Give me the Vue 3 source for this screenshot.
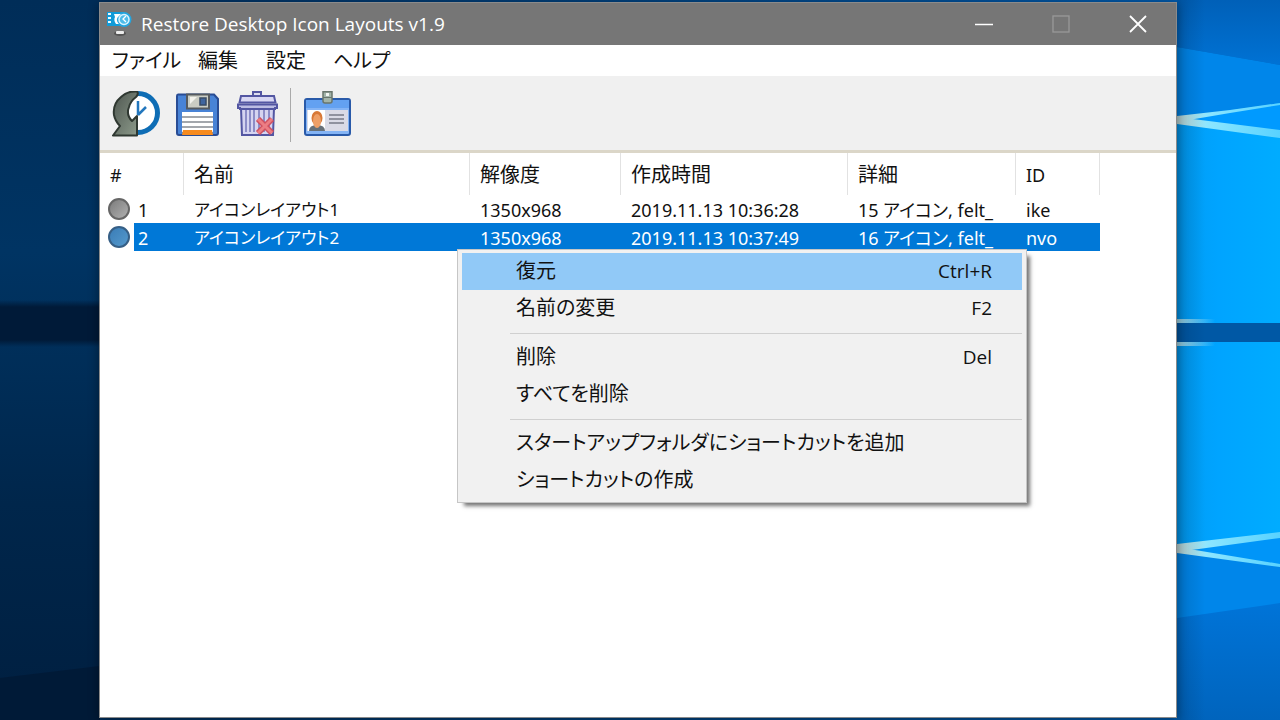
<script setup>
import { ref } from 'vue'

const menus = ['ファイル', '編集', '設定', 'ヘルプ']
const columns = [
  { key: 'no', label: '#' },
  { key: 'name', label: '名前' },
  { key: 'res', label: '解像度' },
  { key: 'time', label: '作成時間' },
  { key: 'detail', label: '詳細' },
  { key: 'id', label: 'ID' }
]
const rows = [
  { no: 1, name: 'アイコンレイアウト1', res: '1350x968', time: '2019.11.13 10:36:28', detail: '15 アイコン, felt_', id: 'ike' },
  { no: 2, name: 'アイコンレイアウト2', res: '1350x968', time: '2019.11.13 10:37:49', detail: '16 アイコン, felt_', id: 'nvo' }
]
const selected = ref(2)
const groups = [
  [{ label: '復元', key: 'Ctrl+R', hot: true }, { label: '名前の変更', key: 'F2' }],
  [{ label: '削除', key: 'Del' }, { label: 'すべてを削除', key: '' }],
  [{ label: 'スタートアップフォルダにショートカットを追加', key: '' }, { label: 'ショートカットの作成', key: '' }]
]
</script>

<template>
  <div class="desktop">
    <svg class="wallpaper" viewBox="0 0 1280 720" preserveAspectRatio="none" aria-hidden="true">
      <defs>
        <linearGradient id="left" x1="0" y1="0" x2="0" y2="1">
          <stop offset="0" stop-color="#002d58" />
          <stop offset=".35" stop-color="#003463" />
          <stop offset=".7" stop-color="#00264b" />
          <stop offset="1" stop-color="#001f40" />
        </linearGradient>
        <linearGradient id="band" x1="0" y1="0" x2="0" y2="1">
          <stop offset="0" stop-color="#001a38" stop-opacity="0" />
          <stop offset=".15" stop-color="#001a38" />
          <stop offset=".85" stop-color="#001a38" />
          <stop offset="1" stop-color="#001a38" stop-opacity="0" />
        </linearGradient>
        <linearGradient id="top" x1="0" y1="0" x2="1" y2="0">
          <stop offset="0" stop-color="#002b57" />
          <stop offset=".5" stop-color="#00417d" />
          <stop offset="1" stop-color="#005db2" />
        </linearGradient>
        <linearGradient id="upper" x1="0" y1="0" x2="0" y2="1">
          <stop offset="0" stop-color="#0060b8" />
          <stop offset="1" stop-color="#0072d4" />
        </linearGradient>
        <linearGradient id="lower" x1="0" y1="0" x2="0" y2="1">
          <stop offset="0" stop-color="#0074d8" />
          <stop offset="1" stop-color="#0064bd" />
        </linearGradient>
        <linearGradient id="pane" x1="0" y1="0" x2="1" y2="0">
          <stop offset="0" stop-color="#009cf4" />
          <stop offset=".4" stop-color="#00a4ff" />
          <stop offset="1" stop-color="#00acff" />
        </linearGradient>
        <linearGradient id="ray" x1="0" y1="0" x2="1" y2="0">
          <stop offset="0" stop-color="#d2e6df" />
          <stop offset=".3" stop-color="#8ce6ff" />
          <stop offset="1" stop-color="#58d2ff" />
        </linearGradient>
        <linearGradient id="shade" x1="0" y1="0" x2="1" y2="0">
          <stop offset="0" stop-color="#00203c" stop-opacity=".2" />
          <stop offset="1" stop-color="#00203c" stop-opacity="0" />
        </linearGradient>
        <linearGradient id="glint" x1="0" y1="0" x2="1" y2="0">
          <stop offset="0" stop-color="#b4e4ee" />
          <stop offset="1" stop-color="#b4e4ee" stop-opacity="0" />
        </linearGradient>
      </defs>
      <rect width="1280" height="720" fill="url(#top)" />
      <rect width="100" height="720" fill="url(#left)" />
      <path d="M0 300H100V347H0z" fill="url(#band)" />
      <path d="M0 678L100 666V720H0z" fill="#001a37" />
      <path d="M1177 0H1280V65L1177 47z" fill="url(#upper)" />
      <path d="M1177 47L1280 65V720H1177z" fill="#0086ea" />
      <path d="M1177 121L1280 103V346H1177z" fill="url(#pane)" />
      <path d="M1177 118L1280 103V132z" fill="#009aff" />
      <path d="M1177 116L1230 110L1280 103V105L1230 113L1177 122z" fill="url(#ray)" />
      <path d="M1177 117L1280 130V138L1177 124z" fill="url(#ray)" />
      <path d="M1177 342H1280V533L1177 549z" fill="url(#pane)" />
      <path d="M1177 319H1215V323H1177zM1177 342H1215V346H1177z" fill="url(#glint)" />
      <path d="M1177 323H1280V342H1177z" fill="#0058a5" />
      <path d="M1177 549L1280 534V565z" fill="#0095f8" />
      <path d="M1177 618L1280 603V720H1177z" fill="url(#lower)" />
      <path d="M1177 544L1280 532V538L1177 552z" fill="url(#ray)" />
      <path d="M1177 547L1280 564V567L1177 553z" fill="url(#ray)" />
      <rect x="1177" width="28" height="720" fill="url(#shade)" />
    </svg>

    <main class="window">
      <header class="titlebar">
        <svg class="app-icon" viewBox="0 0 26 26" aria-hidden="true">
          <rect x="0" y="1" width="17" height="14" fill="#119bd8" />
          <path d="M1 2h3v2H1zM1 6h3v2H1zM1 10h3v2H1z" fill="#e9f9ff" />
          <circle cx="17" cy="8.500" r="7.500" fill="#25a5df" />
          <circle cx="17" cy="8.500" r="5" fill="#4dbbe9" stroke="#d9f4ff" stroke-width="1.500" />
          <path d="M7 3h7l-3 3c-2 2-1 5 1 7H9c-2-3-2-5-1-7z" fill="#fff" />
          <path d="M19 5l-3 3 3 3" fill="none" stroke="#fff" stroke-width="1.300" />
          <ellipse cx="13" cy="22.500" rx="6" ry="2.500" fill="#555" />
          <rect x="9" y="20" width="8" height="3" rx="1" fill="#ececec" />
        </svg>
        <h1>Restore Desktop Icon Layouts v1.9</h1>
        <div class="controls">
          <button type="button" aria-label="最小化"><svg viewBox="0 0 20 20"><path d="M1 10.500H19" stroke="#fff" stroke-width="1.500" /></svg></button>
          <button type="button" aria-label="最大化" disabled><svg viewBox="0 0 20 20"><rect x="2" y="2" width="16" height="16" fill="none" stroke="#999" stroke-width="1.300" /></svg></button>
          <button type="button" aria-label="閉じる"><svg viewBox="0 0 20 20"><path d="M2 2L18 18M18 2L2 18" stroke="#fff" stroke-width="1.800" /></svg></button>
        </div>
      </header>

      <nav class="menubar">
        <button v-for="m in menus" :key="m" type="button">{{ m }}</button>
      </nav>

      <div class="toolbar">
        <button type="button" aria-label="復元">
          <svg viewBox="0 0 50 48">
            <defs>
              <linearGradient id="arrow" x1="0" y1="0" x2="1" y2="1">
                <stop offset="0" stop-color="#4d554f" />
                <stop offset="1" stop-color="#8d9b8b" />
              </linearGradient>
            </defs>
            <circle cx="28" cy="22" r="19.500" fill="#fff" stroke="#0e6db5" stroke-width="5" />
            <path d="M27 0.500C20 0 15 2 11 6C5 11 3 17 4 24c1 5 3 8 6 11L3 44.500H27V25l-5 5c-4-4-5-9-3-14 1-4 3-7 7-10 1-1 3-3 1-5.500z" fill="url(#arrow)" stroke="#2f3831" stroke-width="2" stroke-linejoin="round" />
            <path d="M28 10V24M28 24L36 16" fill="none" stroke="#2377bd" stroke-width="2.500" />
          </svg>
        </button>
        <button type="button" aria-label="保存">
          <svg viewBox="0 0 50 48">
            <path d="M7 3.500H43L47 8V42Q47 44 45 44H8Q6 44 6 42V5Q6 3.500 7 3.500z" fill="#4883d6" stroke="#294c94" stroke-width="2" />
            <rect x="16" y="3.500" width="22" height="14" fill="#cbcdc3" stroke="#555a5f" stroke-width="2" />
            <path d="M19 6H26L19 13z" fill="#f3f3ed" />
            <rect x="29" y="7" width="6" height="7" fill="#3f659f" stroke="#394b66" stroke-width="1.500" />
            <rect x="11" y="21" width="31" height="20" fill="#fff" />
            <path d="M11 26H42M11 31H42M11 36H42" stroke="#858b91" stroke-width="1.500" />
            <path d="M12 39H41L42 44H11z" fill="#f68b1f" />
          </svg>
        </button>
        <button type="button" aria-label="削除">
          <svg viewBox="0 0 50 48">
            <path d="M21 5V1H29V5" fill="#dde" stroke="#5356a2" stroke-width="2" />
            <path d="M9 17H42L41 44H10z" fill="#d5d4f0" stroke="#5356a2" stroke-width="2" />
            <path d="M6 13.500H45V17H43V18H8V17H6z" fill="#bcbde3" stroke="#5356a2" stroke-width="2" />
            <path d="M9 5H42L43.500 11.500H7.500z" fill="#d8d7f3" stroke="#5356a2" stroke-width="2" />
            <path d="M14 19V41M18 19V41M22 19V41M27 19V41M32 19V41M37 19V41" stroke="#7476b9" stroke-width="1.500" />
            <path d="M26 28L40 42M40 28L26 42" stroke="#cf5060" stroke-width="6" />
            <path d="M26 28L40 42M40 28L26 42" stroke="#ec7d83" stroke-width="3" />
          </svg>
        </button>
        <span class="divider"></span>
        <button type="button" aria-label="プロパティ">
          <svg viewBox="0 0 50 48">
            <rect x="3" y="8" width="45" height="36" rx="2" fill="#84b4f5" stroke="#295aa9" stroke-width="2" />
            <path d="M4 9H47V17H4z" fill="#63a1f1" />
            <rect x="5" y="19" width="41" height="21" fill="#dadbe6" />
            <rect x="6" y="19" width="17" height="21" fill="#fff" />
            <path d="M7 40Q7 34 15 34T23 40z" fill="#667078" />
            <ellipse cx="15" cy="27" rx="5.500" ry="7" fill="#d87937" />
            <ellipse cx="15" cy="30" rx="4" ry="7" fill="#ee9f66" />
            <path d="M27 24H42M27 28H42M27 32H42" stroke="#777b88" stroke-width="1.500" />
            <path d="M21 0.800H30V10Q30 12 28 12H23Q21 12 21 10z" fill="#a2b4a9" stroke="#69756c" stroke-width="1.500" />
            <path d="M24 2H27V5H24z" fill="#f1f4ef" />
            <path d="M21 6.500H30" stroke="#69756c" />
          </svg>
        </button>
      </div>

      <section class="list">
        <table>
          <colgroup>
            <col v-for="c in columns" :key="c.key" :class="'c-' + c.key" />
          </colgroup>
          <thead>
            <tr><th v-for="c in columns" :key="c.key" scope="col">{{ c.label }}</th></tr>
          </thead>
          <tbody>
            <tr v-for="r in rows" :key="r.no" :class="{ selected: r.no === selected }" @click="selected = r.no">
              <td class="first"><div class="index"><i class="dot"></i><span>{{ r.no }}</span></div></td>
              <td class="name">{{ r.name }}</td>
              <td>{{ r.res }}</td>
              <td>{{ r.time }}</td>
              <td>{{ r.detail }}</td>
              <td>{{ r.id }}</td>
            </tr>
          </tbody>
        </table>

        <div class="context" role="menu">
          <div v-for="(g, i) in groups" :key="i" class="group" role="group">
            <button v-for="item in g" :key="item.label" type="button" role="menuitem" :class="{ hot: item.hot }">
              <span>{{ item.label }}</span><kbd>{{ item.key }}</kbd>
            </button>
          </div>
        </div>
      </section>
    </main>
  </div>
</template>

<style>
body {
  margin: 0;
}
</style>

<style scoped>
* {
  box-sizing: border-box;
}
.desktop {
  position: relative;
  display: flex;
  min-height: 100vh;
  padding: 2px 103px 2px 99px;
  background: #002b57;
  font-family: "Open Sans", "Noto Sans CJK JP", sans-serif;
  font-feature-settings: "palt";
}
.wallpaper {
  position: absolute;
  inset: 0;
  width: 100%;
  height: 100%;
}
button {
  margin: 0;
  padding: 0;
  border: 0;
  background: none;
  color: inherit;
  font: inherit;
  font-feature-settings: inherit;
}
.window {
  position: relative;
  flex: 1;
  min-width: 0;
  display: flex;
  flex-direction: column;
  border: 1px solid #8b8b8b;
  background: #fff;
  color: #111;
  box-shadow: 0 2px 10px rgba(0, 0, 0, .4);
}
.titlebar {
  display: flex;
  align-items: center;
  height: 42px;
  padding-left: 7px;
  background: #767676;
  color: #fff;
}
.app-icon {
  width: 26px;
  height: 26px;
}
h1 {
  flex: 1;
  margin: 0 0 0 8px;
  font-size: 19px;
  font-weight: 400;
  line-height: 26px;
  white-space: nowrap;
}
.controls {
  display: flex;
}
.controls button {
  display: grid;
  place-items: center;
  width: 77px;
  height: 42px;
}
.controls svg {
  width: 20px;
  height: 20px;
}
.menubar {
  display: grid;
  grid-template-columns: 86px 68px 67px auto;
  justify-content: start;
  height: 31px;
  padding-left: 12px;
  font-size: 20px;
  line-height: 31px;
}
.menubar button {
  text-align: left;
  white-space: nowrap;
}
.toolbar {
  display: flex;
  align-items: center;
  height: 77px;
  padding: 4px 10px 0;
  border-bottom: 3px solid #dbd6c8;
  background: #f0f0f0;
}
.toolbar button {
  width: 50px;
  height: 48px;
  margin-right: 11px;
}
.toolbar svg {
  display: block;
  width: 50px;
  height: 48px;
}
.divider {
  width: 1px;
  height: 54px;
  margin: 0 11px 0 -3px;
  background: #aaa;
}
.list {
  position: relative;
  flex: 1;
}
table {
  width: 1000px;
  table-layout: fixed;
  border-collapse: separate;
  border-spacing: 0;
  font-family: "Noto Sans", "Noto Sans CJK JP", sans-serif;
  font-size: 18px;
}
.c-no { width: 84px; }
.c-name { width: 286px; }
.c-res { width: 151px; }
.c-time { width: 227px; }
.c-detail { width: 168px; }
.c-id { width: 84px; }
th {
  height: 42px;
  padding: 2px 10px 0;
  border-right: 1px solid #e2e2e2;
  font-size: 20px;
  font-weight: 400;
  line-height: 28px;
  text-align: left;
}
th:first-child,
th:last-child {
  font-size: 18px;
}
td {
  height: 28px;
  padding: 2px 10px 0;
  line-height: 26px;
  white-space: nowrap;
}
td.name {
  font-size: 17px;
}
td.first {
  padding: 0;
}
.index {
  display: flex;
  align-items: center;
  padding-left: 8px;
}
.index span {
  flex: 1;
  margin-left: 4px;
  padding: 2px 0 0 4px;
}
.dot {
  width: 22px;
  height: 22px;
  border: 2px solid #666;
  border-radius: 50%;
  background: linear-gradient(135deg, #7c7c7c, #b0b0b0);
}
.selected .dot {
  border-color: #365f86;
  background: linear-gradient(135deg, #3a7db7, #5599cc);
}
.selected {
  color: #fff;
}
.selected td:not(.first),
.selected .index span {
  background: #0078d7;
}
.context {
  position: absolute;
  top: 96px;
  left: 357px;
  width: 570px;
  padding: 3px 4px;
  border: 1px solid #c6c6c6;
  background: #f1f1f1;
  box-shadow: 5px 5px 4px -2px rgba(0, 0, 0, .55);
  font-size: 20px;
}
.context button {
  display: flex;
  align-items: center;
  justify-content: space-between;
  width: 100%;
  height: 37px;
  padding: 0 30px 1px 54px;
  line-height: 34px;
  white-space: nowrap;
}
.context .hot {
  background: #91c9f7;
}
.context kbd {
  font-family: "Open Sans", sans-serif;
  font-size: 19px;
}
.group + .group::before {
  content: "";
  display: block;
  height: 1px;
  margin: 6px 0 5px 48px;
  background: #d0d0d0;
}
</style>
